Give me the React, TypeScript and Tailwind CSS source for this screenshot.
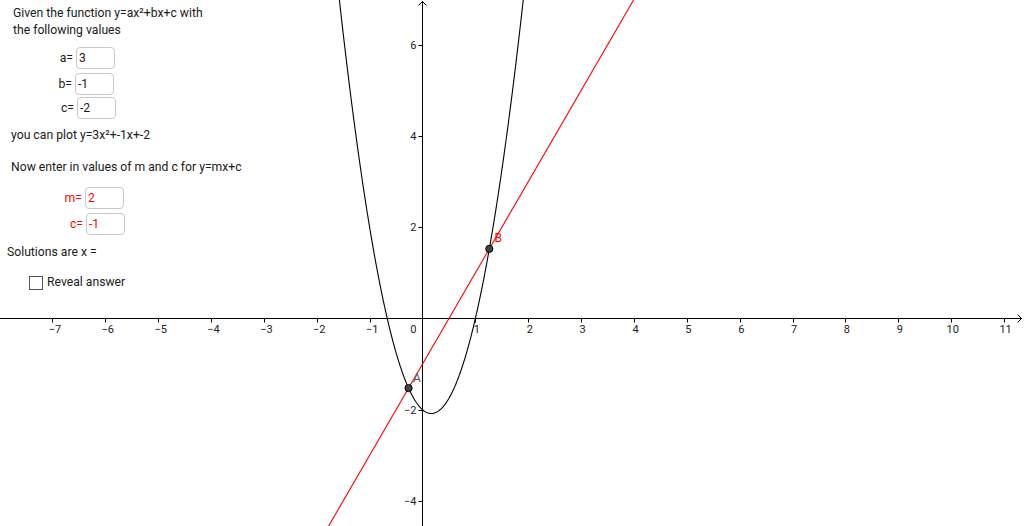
import React from "react";

const OX = 422.5;
const OY = 318.5;
const SX = 52.87;
const SY = 45.6;
const px = (x: number) => OX + x * SX;
const py = (y: number) => OY - y * SY;

function parabolaPath() {
  const pts: string[] = [];
  for (let i = 0; i <= 400; i++) {
    const x = -1.8 + (i / 400) * 3.9;
    const y = 3 * x * x - x - 2;
    pts.push(`${i === 0 ? "M" : "L"}${px(x).toFixed(2)},${py(y).toFixed(2)}`);
  }
  return pts.join(" ");
}

const xs = [-7, -6, -5, -4, -3, -2, -1, 1, 2, 3, 4, 5, 6, 7, 8, 9, 10, 11];
const ys = [6, 4, 2, -2, -4];
const fmt = (n: number) => (n < 0 ? "\u2212" + Math.abs(n) : String(n));

function Graph() {
  return (
    <svg width={1024} height={526} viewBox="0 0 1024 526" className="block">
      <defs>
        <clipPath id="c">
          <rect x={0} y={0} width={1024} height={526} />
        </clipPath>
      </defs>
      {/* axes */}
      <line x1={0} y1={OY} x2={1022} y2={OY} stroke="#000" strokeWidth={1} />
      <line x1={OX} y1={1} x2={OX} y2={526} stroke="#000" strokeWidth={1} />
      <polyline points={`${OX - 4},5.5 ${OX},1.5 ${OX + 4},5.5`} fill="none" stroke="#000" strokeWidth={1} />
      <polyline points={`1017.5,${OY - 4} 1021.5,${OY} 1017.5,${OY + 4}`} fill="none" stroke="#000" strokeWidth={1} />
      {xs.map((x) => (
        <line key={"tx" + x} x1={Math.round(px(x)) + 0.5} y1={OY} x2={Math.round(px(x)) + 0.5} y2={OY + 4} stroke="#000" strokeWidth={1} />
      ))}
      {ys.map((y) => (
        <line key={"ty" + y} x1={OX - 4} y1={Math.round(py(y)) + 0.5} x2={OX} y2={Math.round(py(y)) + 0.5} stroke="#000" strokeWidth={1} />
      ))}
      <g fontFamily="Roboto, 'Liberation Sans', sans-serif" fontSize={11} fill="#222">
        {xs.map((x) => (
          <text key={"lx" + x} x={px(x) + (x < 0 ? 2.5 : 1.5)} y={332.5} textAnchor="middle">
            {fmt(x)}
          </text>
        ))}
        {ys.map((y) => (
          <text key={"ly" + y} x={416.5} y={py(y) + 4} textAnchor="end">
            {fmt(y)}
          </text>
        ))}
        <text x={416.5} y={332.5} textAnchor="end">0</text>
      </g>
      <g clipPath="url(#c)">
        <path d={parabolaPath()} fill="none" stroke="#000" strokeWidth={1.1} />
        <line x1={px(-2)} y1={py(-5)} x2={px(4.2)} y2={py(7.4)} stroke="#ff0000" strokeWidth={1.1} />
      </g>
      {/* points */}
      <circle cx={px(-0.2638)} cy={py(-1.5275)} r={3.6} fill="#444" stroke="#000" strokeWidth={1} />
      <circle cx={px(1.2638)} cy={py(1.5275)} r={3.6} fill="#444" stroke="#000" strokeWidth={1} />
      <g fontFamily="Roboto, 'Liberation Sans', sans-serif" fontSize={12}>
        <text x={413} y={382} fill="#555">A</text>
        <text x={494.5} y={242} fill="#ff0000">B</text>
      </g>
    </svg>
  );
}

function Field({ label, value, labelW, red }: { label: string; value: string; labelW: number; red?: boolean }) {
  return (
    <div className="flex items-center">
      <div className={`text-right pr-[3px] ${red ? "text-[#ff0000]" : ""}`} style={{ width: labelW }}>
        {label}
      </div>
      <div className={`h-[22px] w-[39px] rounded-[4px] border border-[#c8c8c8] bg-white pl-[2px] leading-[20px] ${red ? "text-[#ff0000]" : ""}`}>
        {value}
      </div>
    </div>
  );
}

export default function App() {
  return (
    <div className="relative w-[1024px] h-[526px] overflow-hidden bg-white">
      <Graph />
      <div className="absolute left-0 top-0 flex flex-col font-['Roboto','Liberation_Sans',sans-serif] text-[12.2px] leading-[17px] text-[#1a1a1a]">
        <div className="ml-[13px] mt-[5px]">
          <div>Given the function y=ax²+bx+c with</div>
          <div>the following values</div>
        </div>
        <div className="mt-[8px]">
          <Field label="a=" value="3" labelW={76} />
        </div>
        <div className="mt-[4px]">
          <Field label="b=" value="-1" labelW={75} />
        </div>
        <div className="mt-[2px]">
          <Field label="c=" value="-2" labelW={77} />
        </div>
        <div className="ml-[11px] mt-[8px]">you can plot y=3x²+-1x+-2</div>
        <div className="ml-[11px] mt-[15px]">Now enter in values of m and c for y=mx+c</div>
        <div className="mt-[11px]">
          <Field label="m=" value="2" labelW={85} red />
        </div>
        <div className="mt-[4px]">
          <Field label="c=" value="-1" labelW={86} red />
        </div>
        <div className="ml-[7px] mt-[9px]">Solutions are x =</div>
        <div className="ml-[29px] mt-[13px] flex items-center">
          <div className="h-[14px] w-[14px] border border-[#555] bg-white" />
          <div className="ml-[4px]">Reveal answer</div>
        </div>
      </div>
    </div>
  );
}
